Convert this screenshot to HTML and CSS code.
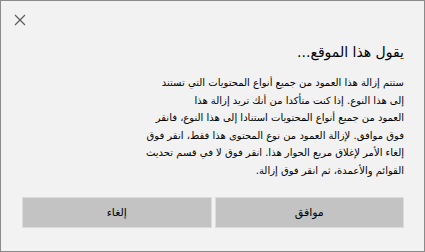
FILE: index.html
```html
<!doctype html>
<html lang="ar" dir="rtl">
  <head>
    <meta charset="utf-8" />
    <title>يقول هذا الموقع</title>
    <link rel="stylesheet" href="styles.css">
  </head>

  <body>
    <div class="dialog">
      <div class="top-bar">
        <button class="close" aria-label="إغلاق">
          <svg width="12" height="12" viewBox="0 0 12 12"><path d="M1 1 L11 11 M11 1 L1 11" stroke="#5a5a5a" stroke-width="1.2" fill="none"/></svg>
        </button>
      </div>

      <h1 class="title">يقول هذا الموقع...</h1>

      <p class="message">
        ستتم إزالة هذا العمود من جميع أنواع المحتويات التي تستند<br>
        إلى هذا النوع. إذا كنت متأكدا من أنك تريد إزالة هذا<br>
        العمود من جميع أنواع المحتويات استنادا إلى هذا النوع، فانقر<br>
        فوق موافق. لإزالة العمود من نوع المحتوى هذا فقط، انقر فوق<br>
        إلغاء الأمر لإغلاق مربع الحوار هذا. انقر فوق لا في قسم تحديث<br>
        القوائم والأعمدة، ثم انقر فوق إزالة.
      </p>

      <div class="actions">
        <button class="btn">موافق</button>
        <button class="btn">إلغاء</button>
      </div>
    </div>
  </body>
</html>
```

FILE: styles.css
```css
body {
  margin: 0;
  font-family: "DejaVu Sans", "Noto Sans", sans-serif;
}

.dialog {
  width: 425px;
  height: 252px;
  box-sizing: border-box;
  border: 1px solid #8a8a8a;
  background-color: #f2f2f2;
  color: #000;
  padding: 0 20px 0 21px;
  display: flex;
  flex-direction: column;
}

.top-bar {
  direction: ltr;
  height: 38px;
  padding-top: 12px;
  box-sizing: border-box;
  margin-left: -9px;
}

.close {
  background: none;
  border: none;
  padding: 0;
  width: 14px;
  height: 14px;
  display: flex;
  align-items: center;
  justify-content: center;
}

.title {
  font-size: 14px;
  font-weight: normal;
  margin: 0;
  line-height: 26px;
}

.message {
  font-size: 10px;
  line-height: 17.5px;
  margin: 9px 0 0 0;
  height: 114px;
}

.actions {
  display: flex;
  gap: 3px;
  margin-top: 9px;
}

.btn {
  flex: 1;
  height: 31px;
  background-color: #c3c3c3;
  border: 1px solid #dcdcdc;
  font-family: inherit;
  font-size: 11px;
  color: #000;
}
```
